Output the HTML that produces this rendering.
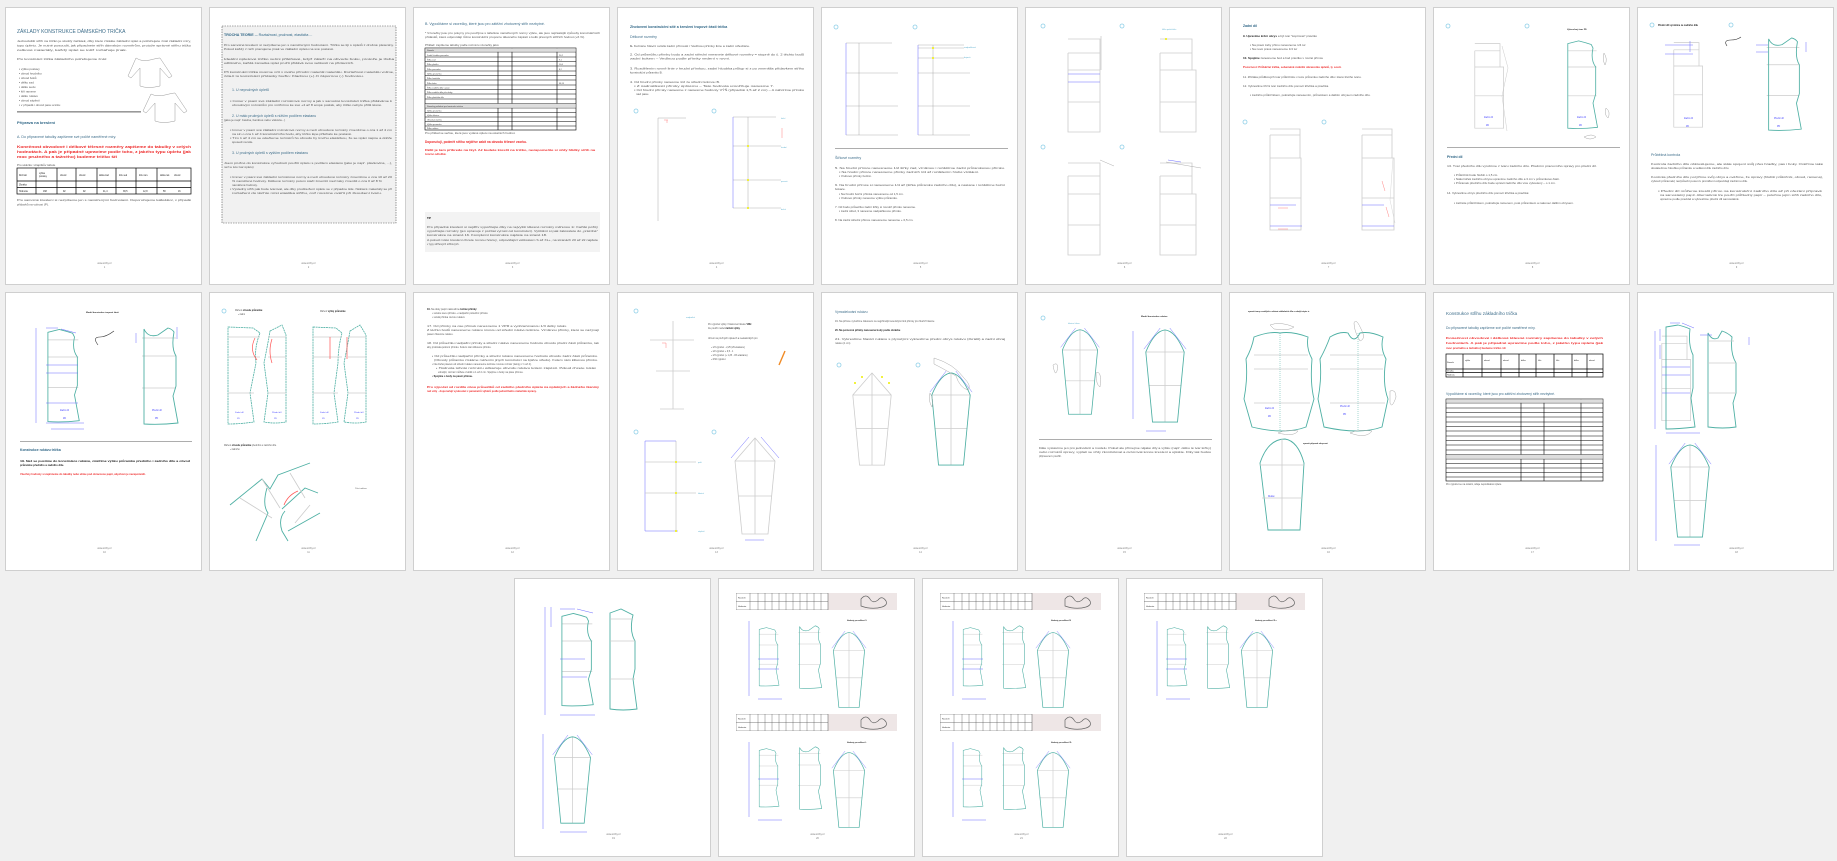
<!DOCTYPE html>
<html><head><meta charset="utf-8">
<style>
html,body{margin:0;padding:0;background:#f0f0f0;width:1837px;height:861px;overflow:hidden;position:relative;font-family:"Liberation Sans",sans-serif}
.pg{position:absolute;width:197px;height:278px;background:#fff;border:1px solid #cfcfcf;box-sizing:border-box}
.pg svg{position:absolute;left:0;top:0;width:197px;height:278px}
text{font-family:"Liberation Sans",sans-serif}
.t{font-size:3px;fill:#555}
.b{font-size:3px;fill:#222;font-weight:bold}
.r{font-size:3.2px;fill:#ee2a2a;font-weight:bold}
.h{font-size:5px;fill:#3d6d8a}
.hb{font-size:4.5px;fill:#2f6686;font-weight:bold}
.f{font-size:2.4px;fill:#777}
.g{stroke:#ccc;stroke-width:.8;fill:none}
.gd{stroke:#999;stroke-width:.4;fill:none}
.tl{stroke:#4fb0a4;stroke-width:.9;fill:none}
.bl{stroke:#6b6bff;stroke-width:.5;fill:none}
.c{fill:none;stroke:#8fd0e8;stroke-width:.8}
</style></head><body>
<svg width="0" height="0" style="position:absolute">
<defs>
<symbol id="bod" viewBox="0 0 40 100"><path class="g" d="M2,12H34M2,30H34M2,62H34"/><path class="tl" d="M2,4L14,1Q22,3 28,5L30,9Q27,22 33,30L33,60L30,70L35,97Q18,99 2,98Z"/></symbol>
<symbol id="bodf" viewBox="0 0 40 100"><path class="g" d="M2,12H36M2,30H36M2,62H36"/><path class="tl" d="M4,3Q8,12 18,9L28,2Q32,3 34,6Q31,22 36,30L36,60L33,70L38,97Q20,99 4,98Z"/></symbol>
<symbol id="bodg" viewBox="0 0 40 100"><path class="g" d="M2,4H30V12H2M2,12V98H34V30H2M2,62H34M30,12V30"/></symbol>
<symbol id="slv" viewBox="0 0 50 100"><path class="g" d="M5,25H45M8,60H42M25,2V98"/><path class="tl" d="M5,25Q14,3 25,2Q36,3 45,25L38,98L12,98Z"/><path class="bl" d="M3,22L20,0M30,0L47,22"/></symbol>
<symbol id="slvg" viewBox="0 0 50 100"><path class="g" d="M5,25L25,2L45,25L38,98H12ZM5,25H45M8,60H42M25,2V98"/></symbol>
<symbol id="hdr" viewBox="0 0 161 17"><rect x="0" y="0" width="161" height="17" fill="#eee6e6"/><rect x="0" y="0" width="92" height="17" fill="#fff" stroke="#555" stroke-width=".5"/><path stroke="#555" stroke-width=".4" d="M0,8.5H92M14,0V17M22,0V17M29,0V17M36,0V17M43,0V17M50,0V17M57,0V17M64,0V17M71,0V17M78,0V17M85,0V17"/><text x="2" y="5.5" style="font-size:2.2px;fill:#333">Rozměr</text><text x="2" y="14" style="font-size:2.2px;fill:#333">Hodnota</text><path d="M125,6q5,-6 9,0q3,5 8,1q4,-5 8,1q2,4 -4,6q-10,3 -21,-1z" fill="none" stroke="#666" stroke-width=".7"/></symbol>
</defs></svg>

<!-- ROW 1 -->
<div class="pg" style="left:5px;top:7px"><svg viewBox="0 0 197 278">
<text x="11" y="25" class="h">ZÁKLADY KONSTRUKCE DÁMSKÉHO TRIČKA</text>
<text x="11" y="34" class="t" textLength="174" lengthAdjust="spacingAndGlyphs">Jednodušší střih na tričko je skvělý začátek, díky které získáte základní úplet a potřebujete znát základní míry,</text>
<text x="11" y="38.5" class="t" textLength="174" lengthAdjust="spacingAndGlyphs">typy úpletu. Je nutné posoudit, jak připadnete střih dámským rozměrům, protože správné střihu tričko</text>
<text x="11" y="43" class="t" textLength="110" lengthAdjust="spacingAndGlyphs">celkové materiály, každý úplet se totiž roztahuje jinak.</text>
<text x="11" y="52" class="t" textLength="90" lengthAdjust="spacingAndGlyphs">Pro konstrukci trička základního potřebujeme znát:</text>
<g class="t"><text x="13" y="62">▪  výšku postavy</text><text x="13" y="66.5">▪  obvod hrudníku</text><text x="13" y="71">▪  obvod boků</text><text x="13" y="75.5">▪  délku zad</text><text x="13" y="80">▪  délku sedu</text><text x="13" y="84.5">▪  šíři ramene</text><text x="13" y="89">▪  délku rukávu</text><text x="13" y="93.5">▪  obvod zápěstí</text><text x="13" y="98">▪  v případě i obvod pasu a krku</text></g>
<path d="M130,50q6,4 14,2q8,-2 10,-2l12,18l-3,2l-9,-10l0,18q-12,3 -20,0l0,-18l-9,10l-3,-2z" fill="none" stroke="#999" stroke-width=".5"/>
<path d="M145,86q6,3 14,1q8,-2 10,-2l12,18l-3,2l-9,-10l0,18q-12,3 -20,0l0,-18l-9,10l-3,-2z" fill="none" stroke="#999" stroke-width=".5"/>
<rect x="11" y="103" width="124" height="1.6" fill="#999"/>
<text x="11" y="116" class="hb" style="font-size:4px">Příprava na kreslení</text>
<text x="11" y="130" class="h" style="font-size:3.6px">A. Do připravené tabulky zapíšeme své počíté naměřené míry.</text>
<text x="11" y="140" class="r" textLength="174" lengthAdjust="spacingAndGlyphs">Konečnost obvodové i délkové tělesné rozměry zapíšeme do tabulky v celých</text>
<text x="11" y="145" class="r" textLength="174" lengthAdjust="spacingAndGlyphs">hodnotách. A pak je případně upravíme podle toho, z jakého typu úpletu (jak</text>
<text x="11" y="150" class="r" textLength="100" lengthAdjust="spacingAndGlyphs">moc pružného a tažného) budeme tričko šít</text>
<text x="11" y="158" class="t">Pro ukázku: Hrapitkův tabule</text>
<g stroke="#000" stroke-width=".7" fill="none"><rect x="11" y="160" width="174" height="26"/><path d="M11,173H185M11,179.5H185M30,160V186M51,160V186M70,160V186M91,160V186M110,160V186M130,160V186M151,160V186"/></g>
<g style="font-size:2.3px;fill:#222"><text x="13" y="168">Rozměr</text><text x="33" y="166">výška</text><text x="33" y="169">postavy</text><text x="54" y="168">obvod</text><text x="73" y="168">obvod</text><text x="93" y="168">délka zad</text><text x="113" y="168">šíře sed</text><text x="133" y="168">šíře ram.</text><text x="154" y="168">délka ruk.</text><text x="168" y="168">obvod</text><text x="13" y="177.5">Zkratka</text><text x="13" y="184">Hodnota</text><text x="37" y="184">168</text><text x="57" y="184">92</text><text x="77" y="184">92</text><text x="97" y="184">41,4</text><text x="117" y="184">38,5</text><text x="137" y="184">12,8</text><text x="157" y="184">58</text><text x="172" y="184">16</text></g>
<text x="11" y="193" class="t" textLength="174" lengthAdjust="spacingAndGlyphs">Pro samotné kreslení si nezpíšeme jen s naměřenými hodnotami. Doporučujeme kalkulátor, v případě</text>
<text x="11" y="197.5" class="t">přídavků na volnost (P).</text>
<text x="98.5" y="256" class="f" text-anchor="middle">www.strihy.cz</text><text x="98.5" y="260" class="f" text-anchor="middle">1</text>
</svg></div>

<div class="pg" style="left:209px;top:7px"><svg viewBox="0 0 197 278">
<rect x="12" y="18" width="174" height="197" fill="#f1f1f1" stroke="#555" stroke-width=".6" stroke-dasharray="1.5,1"/>
<text x="14" y="28" class="hb" style="font-size:3.6px">TROCHA TEORIE ... <tspan style="font-weight:normal">Roztažnost, pružnost, elasticita ...</tspan></text>
<g class="t"><text x="14" y="38" textLength="170" lengthAdjust="spacingAndGlyphs">Pro samotné kreslení si nezpíšeme jen s naměřenými hodnotami. Tričko se tiji s úpletů z drobné pleteniny.</text>
<text x="14" y="42" textLength="110" lengthAdjust="spacingAndGlyphs">Pokud každý z nich pracujeme jinak ve základní úpletu na své postavě.</text>
<text x="14" y="52" textLength="170" lengthAdjust="spacingAndGlyphs">Ideální úpletové tričko velmi přiléhavé, když záleží na obvodu boku, protože je třeba</text>
<text x="14" y="56" textLength="130" lengthAdjust="spacingAndGlyphs">odlišného, každá zametka úplet pružit přidává svou velikostí na přídavcích.</text>
<text x="14" y="65" textLength="170" lengthAdjust="spacingAndGlyphs">Při konstrukci trička musíme vzít v úvahu přírodní materiál materiálu. Roztažnost materiálu volime,</text>
<text x="14" y="69" textLength="140" lengthAdjust="spacingAndGlyphs">zda-li tu konstrukci přídavky buďto: Kladnou (+) či zápornou (-) hodnotou.</text></g>
<text x="22" y="83" class="h" style="font-size:3.6px">1.  U nepružných úpletů</text>
<g class="t"><text x="20" y="94" textLength="162" lengthAdjust="spacingAndGlyphs">▪ Immer v psaní své základní rozměrové normy a jak v samotné konstrukci trička přidáváme k</text>
<text x="22" y="98" textLength="150" lengthAdjust="spacingAndGlyphs">obvodovým rozměrům pro vnitřnímu ke své +4 až 8 ampé potěsk, aby tričko nebylo příliš těsné.</text></g>
<text x="22" y="109" class="h" style="font-size:3.6px">2.  U málo pružných úpletů s nižším podílem elastanu</text>
<text x="14" y="113" class="t">(jako je např. bavlna, bambus nebo viskóza...)</text>
<g class="t"><text x="20" y="123" textLength="162" lengthAdjust="spacingAndGlyphs">▪ Immer v psaní své základní rozměrové normy a mezi obvodové rozměry zmenšíme o cca 1 až 4 cm</text>
<text x="22" y="127" textLength="120" lengthAdjust="spacingAndGlyphs">na sin o cca 1 až 4 konstrukčního bodu, aby tričko lépe přiléhalo ke postavě.</text>
<text x="20" y="131" textLength="162" lengthAdjust="spacingAndGlyphs">▪ Tím 1 až 4 cm se odečteme rozměrů ho obvodu by trochu elastickou, že se úplet napne a dobře</text>
<text x="22" y="135">sposedí na těle.</text></g>
<text x="22" y="146" class="h" style="font-size:3.6px">3.  U pružných úpletů s vyšším podílem elastanu</text>
<g class="t"><text x="14" y="156" textLength="168" lengthAdjust="spacingAndGlyphs">Jsem pružné do konstrukce vyhodnotí použití úpletu s podílem elastanu (jako je např. plavkovina, ...),</text>
<text x="14" y="160">než ie tuto tvar úpletu)</text>
<text x="20" y="170" textLength="162" lengthAdjust="spacingAndGlyphs">▪ Immer v psaní své základní rozměrové normy a mezi obvodové rozměry zmenšíme o cca 10 až 20</text>
<text x="22" y="174" textLength="150" lengthAdjust="spacingAndGlyphs">% naměřené hodnoty. Délkové rozměry potom stačí zmenšit mezi taky zmenšit o cca 0 až 8 %</text>
<text x="22" y="178">naměřené hodnoty.</text>
<text x="20" y="182" textLength="162" lengthAdjust="spacingAndGlyphs">▪ Výsledný střih pak bude tvarovat, ale díky prodloužení úpletu se v připadne těle. Některé materiály se při</text>
<text x="22" y="186" textLength="150" lengthAdjust="spacingAndGlyphs">roztažení do těchto míst elastika střihu, což musíme ověřit při zkoušení tvaru.</text></g>
<text x="98.5" y="256" class="f" text-anchor="middle">www.strihy.cz</text><text x="98.5" y="260" class="f" text-anchor="middle">2</text>
</svg></div>

<div class="pg" style="left:413px;top:7px"><svg viewBox="0 0 197 278">
<text x="11" y="17" class="h" style="font-size:3.6px">B. Vypočítáme si vzorečky, které jsou pro zátěžní zhotovený střih nezbytné.</text>
<text x="11" y="26" class="t" textLength="175" lengthAdjust="spacingAndGlyphs">* Vzorečky jsou pro pokyny pro použijme s tabulkou naměřených normy výšce, ale jsou nejčastější způsoby konstrukčních</text>
<text x="11" y="30" class="t" textLength="160" lengthAdjust="spacingAndGlyphs">přídavků, které odpovídají různé konstrukční proporce tělesného zápěstí s kolik přesných střižích hodnot (+6 %).</text>
<text x="11" y="38" class="t">Příklad: zapíšeme tabulky podle rozměru vzorečky jako:</text>
<g stroke="#000" stroke-width=".6" fill="none"><rect x="11" y="40" width="151" height="82"/>
<path d="M11,44H162M11,49H162M11,53.5H162M11,58H162M11,63H162M11,67.5H162M11,72H162M11,77H162M11,81.5H162M11,86H162M11,91H162M11,95.5H162M11,100H162M11,104.5H162M11,109H162M11,113.5H162M11,118H162M84,40V95.5M84,100V122M98,40V95.5M98,100V122M143,40V95.5M143,100V122"/></g>
<rect x="11.3" y="95.8" width="150.4" height="4" fill="#ddd"/><rect x="11.3" y="40.3" width="150.4" height="3.5" fill="#ddd"/>
<g style="font-size:2px;fill:#333"><text x="13" y="43">Rozměr</text><text x="13" y="48">Zadní hloubka průramku</text><text x="13" y="52.5">Šířka zad</text><text x="13" y="57">Šířka předku</text><text x="13" y="62">Šířka průramku</text><text x="13" y="66.5">Výška průramku</text><text x="13" y="71">Šířka hrudníku</text><text x="13" y="76">Šířka boků</text><text x="13" y="80.5">Šířka zadního dílu v pase</text><text x="13" y="85">Šířka zadního dílu přes boky</text><text x="13" y="90">Šířka předního dílu</text><text x="13" y="99">Rozměry potřebné pro konstrukci rukávu</text><text x="13" y="103.5">Výška průramku</text><text x="13" y="108">Výška hlavice</text><text x="13" y="112.5">Obvod průramku</text><text x="13" y="117">Výška průramku</text><text x="13" y="121">Šířka rukávu</text><text x="145" y="48">20,2</text><text x="145" y="52.5">9,1</text><text x="145" y="57">10,6</text><text x="145" y="62">8,2</text><text x="145" y="76">38,15</text></g>
<text x="11" y="126" class="t">Pro příklad se sečtou, které jsou vydané úpletu na ostatních hodnot.</text>
<text x="11" y="135" class="r">Doporučuji, podmět střihu nejdříve zabít na obvodu tělesné vzorku.</text>
<text x="11" y="143" class="r" style="font-size:2.9px" textLength="170" lengthAdjust="spacingAndGlyphs">Dělit je tam přibrede na tkyl. Až budete kreslit na tričko, nezapomeňte si vždy hlídky střih na</text>
<text x="11" y="147" class="r" style="font-size:2.9px">tvorné odložbě.</text>
<rect x="11" y="204" width="175" height="40" fill="#f3f3f3"/>
<text x="13" y="211" class="b" style="font-size:2.6px">TIP</text>
<g class="t" style="font-size:2.6px"><text x="13" y="220" textLength="171" lengthAdjust="spacingAndGlyphs">Pro případné kreslení si nejdřív vypočítejte díky na nejvyšší tělesné rozměry měřenou 1/. Každé požitý</text>
<text x="13" y="224" textLength="171" lengthAdjust="spacingAndGlyphs">vypočítejte rozměry (jen opravuje z počítat vyrostí cel konstrukci). Vytištění si pak zakreslete do „prázdné"</text>
<text x="13" y="228" textLength="120" lengthAdjust="spacingAndGlyphs">konstrukce na straně 16. Kompletní konstrukce najdete na straně 18.</text>
<text x="13" y="233" textLength="171" lengthAdjust="spacingAndGlyphs">A pokud místo kreslení chcete rovnou hotový, odpovídající velikostem S až XL+, na stranách 20 až 22 najdete</text>
<text x="13" y="237">v typy střihových střihových.</text></g>
<text x="98.5" y="256" class="f" text-anchor="middle">www.strihy.cz</text><text x="98.5" y="260" class="f" text-anchor="middle">3</text>
</svg></div>

<div class="pg" style="left:617px;top:7px"><svg viewBox="0 0 197 278">
<text x="12" y="20" class="hb" style="font-size:3.6px">Zhotovení konstrukční sítě a kreslení trupové části trička</text>
<text x="12" y="30" class="h" style="font-size:3.6px">Délkové rozměry</text>
<g class="t"><text x="12" y="39" textLength="120" lengthAdjust="spacingAndGlyphs"><tspan class="b">1.</tspan> Kolmice hlavní svislá zadní přímosti / Vedlnou přímky linie a zadní střednice.</text>
<text x="12" y="47.5" textLength="174" lengthAdjust="spacingAndGlyphs">2. Od průsečíku přímky bodu a zadní střední vnesnete délkové rozměry = stupně do č. 2 těchto bodů</text>
<text x="12" y="51.5" textLength="100" lengthAdjust="spacingAndGlyphs">zadní bokem – Vedlnou podle přímky vedení v rovni.</text>
<text x="12" y="61.5" textLength="174" lengthAdjust="spacingAndGlyphs">3. Rozdělením rovně linie v hrudní přímkou, zadní hloubka průtyp si z po zmenšila přídavkem střihu</text>
<text x="12" y="65.5">konstrukční průramku B.</text>
<text x="12" y="75" textLength="90" lengthAdjust="spacingAndGlyphs">4. Od hrudní přímky nanesme 1/2 ze střední kolmou B.</text>
<text x="16" y="79" textLength="140" lengthAdjust="spacingAndGlyphs">▪ Z nadmělkostí přímky úplnému – Tato hodnota umožňuje nanesme 7.</text>
<text x="16" y="83" textLength="170" lengthAdjust="spacingAndGlyphs">▪ Od hrudní přímky nanesme z nanesme hodnoty VÝŠ (případně 1,5 až 2 cm) – A nabízíme přímku</text>
<text x="18" y="87">nad pasu.</text></g>
<circle cx="18" cy="103" r="2" class="c"/><circle cx="96" cy="103" r="2" class="c"/>
<path class="gd" d="M40,110H68M40,110V213"/><path d="M46,112h4M49,112v3" stroke="#f66" stroke-width=".4"/>
<path class="g" d="M115,109H158M115,138H163M115,172H163M115,200H163"/><path class="gd" d="M130,109V200"/><path class="bl" d="M115,109V200"/>
<g fill="#ee0"><circle cx="130" cy="138" r="1"/><circle cx="130" cy="172" r="1"/><circle cx="130" cy="200" r="1"/></g>
<path d="M164,120v10" stroke="#f66" stroke-width=".4"/>
<g style="font-size:2px;fill:#5fb0cf"><text x="163" y="111">krční</text><text x="163" y="140">hrudní</text><text x="163" y="174">pasová</text><text x="163" y="202">boční</text></g>
<text x="98.5" y="256" class="f" text-anchor="middle">www.strihy.cz</text><text x="98.5" y="260" class="f" text-anchor="middle">4</text>
</svg></div>

<div class="pg" style="left:821px;top:7px"><svg viewBox="0 0 197 278">
<circle cx="14" cy="19" r="2" class="c"/><circle cx="93" cy="19" r="2" class="c"/>
<path class="g" d="M24,35H70M24,65H76M24,98H76M24,127H76M96,37H142M96,40H142M96,50H142M96,65H148M96,98H148M96,127H148"/>
<path class="gd" d="M37,35V127M111,37V127"/><path class="bl" d="M24,35V127M96,37V127"/>
<g fill="#ee0"><circle cx="111" cy="40" r="1"/><circle cx="111" cy="50" r="1"/></g>
<g style="font-size:2.2px;fill:#5fb0cf"><text x="142" y="40">nadpažková</text><text x="142" y="50">bojová</text></g>
<rect x="13" y="140" width="173" height=".8" fill="#999"/>
<text x="13" y="151" class="h" style="font-size:3.6px">Šířkové rozměry</text>
<g class="t"><text x="13" y="161" textLength="170" lengthAdjust="spacingAndGlyphs">5. Na hrudní přímce nanesneme 1/2 šířky zad, vzniknou i rozdělíme zadní průramkovou přímku.</text>
<text x="17" y="165" textLength="140" lengthAdjust="spacingAndGlyphs">▪ Na hrudní přímce nanesneme přímky zadních 1/4 až rozdělením hrubé vzdálení.</text>
<text x="17" y="169">▪ Vrubové přímky bočně.</text>
<text x="13" y="178" textLength="170" lengthAdjust="spacingAndGlyphs">6. Na hrudní přímce si nanesneme 1/4 až (šířka průramku zadního dílu), a nastane i rozdělíme boční</text>
<text x="13" y="182">bokace.</text>
<text x="17" y="187">▪ Na hrudní boční přímka nanesneme od 1,5 cm.</text>
<text x="17" y="191">▪ Vrubové přímky nanesme výšku průramku.</text>
<text x="13" y="200">7. Od bodu průsečíku zadní šířky si rovněž přímku nanesme.</text>
<text x="17" y="204">▪ zadní střed, 3 nanesme nadpažkovou přímku.</text>
<text x="13" y="213">8. Na zadní střední přímce nanesneme nanesme + 0,5 cm.</text></g>
<text x="98.5" y="256" class="f" text-anchor="middle">www.strihy.cz</text><text x="98.5" y="260" class="f" text-anchor="middle">5</text>
</svg></div>

<div class="pg" style="left:1025px;top:7px"><svg viewBox="0 0 197 278">
<circle cx="17" cy="18" r="2" class="c"/><circle cx="96" cy="18" r="2" class="c"/>
<path class="g" d="M42,31H74V45H42M42,45V124H74V62H42M42,94H74M74,45V62"/>
<path class="g" d="M134,31H166V45H134M134,45V124H170V62H134M134,94H170M166,45V62"/>
<path class="bl" d="M42,66H74M42,74H74"/><path class="gd" d="M75,28V62"/>
<circle cx="140" cy="31" r="1" fill="#ee0"/>
<text x="136" y="22" style="font-size:2px;fill:#5fb0cf">šířka průkrčníku</text>
<circle cx="17" cy="139" r="2" class="c"/><circle cx="96" cy="139" r="2" class="c"/>
<path class="g" d="M42,155H74V168H42M42,168V247H74V186H42M42,217H74M74,168V186"/>
<path class="g" d="M134,155H166V168H134M134,168V247H170V186H134M134,217H170M166,168V186"/>
<path class="gd" d="M74,152L88,158M140,154L175,160"/><path class="bl" d="M142,152L155,154"/>
<text x="98.5" y="256" class="f" text-anchor="middle">www.strihy.cz</text><text x="98.5" y="260" class="f" text-anchor="middle">6</text>
</svg></div>

<div class="pg" style="left:1229px;top:7px"><svg viewBox="0 0 197 278">
<text x="13" y="19" class="hb" style="font-size:3.4px">Zadní díl</text>
<g class="t"><text x="13" y="29"><tspan class="b">9. Upravíme krční obrys</tspan> a být tvar "kopírovat" pravítko</text>
<text x="20" y="38">▪ Na pravé zaby přímu nanesneme 1/4 tur</text><text x="20" y="42">▪ Na nové pravé nanesneme 1/4 tur</text>
<text x="13" y="51"><tspan class="b">10. Spojíme</tspan> zanesneme bod a bod pravítko v rovině přímce</text>
<text x="13" y="60" class="r" style="font-size:2.8px">Pozornost: Průběžně trička, sebeméně mobilní obrazovku úpletů, tj. souti.</text>
<text x="13" y="70">11. Zhňáka průdlkových tvar průkrčníku v tuze průramku zadního dílu i které třetího tvaru.</text>
<text x="13" y="79">12. Vykreslíme tříční tvar zadního dílu pomocí křivítka a pravítka</text>
<text x="20" y="88">▪ zadního průkrčníkem, pokračujte nanesením, průramkem a dalším obrysem zadního dílu.</text></g>
<circle cx="15" cy="114" r="2" class="c"/><circle cx="94" cy="114" r="2" class="c"/>
<path class="g" d="M40,121H70V127H40M40,127V222H71V150H40M40,190H71M70,127V150"/>
<path class="g" d="M132,121H162V127H132M132,127V222H164V150H132M132,190H164M162,127V150"/>
<path class="bl" d="M40,197H66M40,218H72M132,197H154M132,218H164"/><path d="M48,200h10M48,221h10M152,173l3,10M156,199l3,10" stroke="#f66" stroke-width=".4"/>
<path d="M163,150L160,192L165,215" stroke="#ccc" stroke-width=".4" fill="none"/>
<text x="98.5" y="256" class="f" text-anchor="middle">www.strihy.cz</text><text x="98.5" y="260" class="f" text-anchor="middle">7</text>
</svg></div>

<div class="pg" style="left:1433px;top:7px"><svg viewBox="0 0 197 278">
<circle cx="14" cy="18" r="2" class="c"/><circle cx="93" cy="18" r="2" class="c"/>
<text x="133" y="22" class="b" style="font-size:2.2px">Vykreslený tvar ZD</text>
<use href="#bodg" x="39" y="30" width="36" height="94"/><path d="M68,38L74,60L68,88L73,123" stroke="#ccc" stroke-width=".5" fill="none"/>
<use href="#bod" x="132" y="30" width="36" height="94"/>
<g style="font-size:2.3px;fill:#44f"><text x="50" y="110">Zadní díl</text><text x="52" y="118">ZD</text><text x="143" y="110">Zadní díl</text><text x="145" y="118">ZD</text></g>
<path d="M170,45q4,6 1,12q-3,-6 -1,-12zM172,100q5,4 2,10q-4,-3 -2,-10zM150,129q8,-4 12,0q-6,4 -12,0z" fill="none" stroke="#aaa" stroke-width=".5"/>
<rect x="13" y="139" width="173" height=".8" fill="#999"/>
<text x="13" y="150" class="hb" style="font-size:3.4px">Přední díl</text>
<g class="t"><text x="13" y="159" textLength="150" lengthAdjust="spacingAndGlyphs">13. Tvar předního dílu vyrobíme z tvaru zadního dílu. Předním pracovního úpravy pro přední díl.</text>
<text x="20" y="168">▪ Průkrčník bude hlubší o 1,5 cm.</text><text x="20" y="172">▪ Nákorníček zadního obrysu upravíme zadního dílu a 3 cm v průramkové části.</text><text x="20" y="176">▪ Průramek předního dílu bude upravit zadního dílu více vyboulený – o 1 cm.</text>
<text x="13" y="186">14. Vykreslíme obrys předního dílu pomocí křivítka a pravítka:</text>
<text x="20" y="196">▪ začněte průkrčníkem, pokračujte ramenem, poté průramkem a nakonec dalším obrysem.</text></g>
<text x="98.5" y="256" class="f" text-anchor="middle">www.strihy.cz</text><text x="98.5" y="260" class="f" text-anchor="middle">8</text>
</svg></div>

<div class="pg" style="left:1637px;top:7px"><svg viewBox="0 0 197 278">
<circle cx="14" cy="17" r="2" class="c"/><circle cx="93" cy="17" r="2" class="c"/>
<text x="20" y="18" class="b" style="font-size:2.4px">Přední díl vyrobíme ze zadního dílu</text>
<use href="#bodg" x="34" y="28" width="36" height="96"/><path class="bl" d="M27,37H55M27,46H55M52,33V44"/>
<path d="M89,38q-4,-6 4,-6q6,0 10,-3" stroke="#333" stroke-width=".6" fill="none"/>
<use href="#bodf" x="125" y="28" width="42" height="96"/><path class="bl" d="M118,37H130M118,44H130M168,34V44"/>
<g style="font-size:2.3px;fill:#44f"><text x="46" y="111">Zadní díl</text><text x="48" y="119">ZD</text><text x="136" y="111">Přední díl</text><text x="139" y="119">PD</text></g>
<text x="13" y="148" class="h" style="font-size:3.6px">Průběžná kontrola</text>
<g class="t"><text x="13" y="157" textLength="172" lengthAdjust="spacingAndGlyphs">Kontrola zadního dílu obkreslujeme, ale stále spojení svůj přes bradky, pas i boky. Ověříme také</text>
<text x="13" y="161">dostatečnou hloubku průramku a velikost dílu zadního dílu.</text>
<text x="13" y="170" textLength="172" lengthAdjust="spacingAndGlyphs">Kontrola předního dílu porýžíme svůj obrys a ověříme, že úpravy (hlubší průkrčník, obvod, ramena),</text>
<text x="13" y="174">vyboulí průramek) nezpůsobí posun k prorážení odpovídají zadnímu dílu.</text>
<text x="20" y="184" textLength="164" lengthAdjust="spacingAndGlyphs">▪ Přední díl můžeme kreslit přímo na konstrukční zadního dílu až při ořezání přípravě</text>
<text x="22" y="188" textLength="162" lengthAdjust="spacingAndGlyphs">na samostatný papír. Alternativně lze použít průhledný papír – položme jejím střih zadního dílu,</text>
<text x="22" y="192">upravme podle pravidel a vykreslíme přední díl samostatně.</text></g>
<text x="98.5" y="256" class="f" text-anchor="middle">www.strihy.cz</text><text x="98.5" y="260" class="f" text-anchor="middle">9</text>
</svg></div>

<!-- ROW 2 -->
<div class="pg" style="left:5px;top:292px;height:279px"><svg viewBox="0 0 197 278">
<text x="80" y="20" class="b" style="font-size:2.2px">Model konstrukce trupové části</text>
<use href="#bod" x="40" y="33" width="38" height="100"/><path class="bl" d="M30,35V130M40,35H52M55,36L70,40M40,72H72M40,80H72M40,110H72M40,130H78M45,136H78"/>
<path d="M92,52q-6,-8 2,-8q6,0 14,-6" stroke="#333" stroke-width=".6" fill="none"/>
<use href="#bodf" x="134" y="33" width="40" height="100"/><path class="bl" d="M130,40V50M171,34V46"/>
<g style="font-size:2.3px;fill:#44f"><text x="54" y="118">Zadní díl</text><text x="57" y="126">ZD</text><text x="146" y="118">Přední díl</text><text x="149" y="126">PD</text></g>
<rect x="14" y="148" width="172" height=".8" fill="#999"/>
<text x="14" y="158" class="hb" style="font-size:3.4px">Konstrukce rukávu trička</text>
<text x="14" y="169" class="b" style="font-size:2.7px" textLength="170" lengthAdjust="spacingAndGlyphs">19. Než se pustíme do konstrukce rukávu, změříme výšku průramku předního i zadního dílu a obvod</text>
<text x="14" y="173" class="b" style="font-size:2.7px">průramku předního a zadního dílu.</text>
<text x="14" y="182" class="r" style="font-size:2.6px">Všechny hodnoty si zapišneme do tabulky nebo ulíme pod obrazovou papír, abychom je nezapomněli.</text>
<text x="98.5" y="256" class="f" text-anchor="middle">www.strihy.cz</text><text x="98.5" y="260" class="f" text-anchor="middle">10</text>
</svg></div>

<div class="pg" style="left:209px;top:292px;height:279px"><svg viewBox="0 0 197 278">
<circle cx="14" cy="18" r="2" class="c"/>
<text x="25" y="18" class="t" style="font-size:2.3px">Měření <tspan class="b" style="font-size:2.3px">obvodu průramku</tspan></text><text x="28" y="22" class="t" style="font-size:2.3px">▪ zadní</text>
<text x="110" y="19" class="t" style="font-size:2.3px">Měření <tspan class="b" style="font-size:2.3px">výšky průramku</tspan></text>
<g stroke="#4fb0a4" stroke-width=".8" fill="none" stroke-dasharray="2,.6">
<path d="M18,34L43,35L50,40Q44,55 46,70L40,100L44,129Q30,131 18,131Z"/><path d="M60,38L72,32L76,42L76,129Q65,131 54,129L58,100L54,70Q58,50 60,38Z"/>
<path d="M103,34L126,35L132,40Q128,55 128,70L124,100L128,129Q115,131 103,131Z"/><path d="M140,38L150,32L156,42L156,129Q146,131 134,129L138,100L134,70Q138,50 140,38Z"/></g>
<path class="g" d="M18,44H50M18,64H50M18,100H44M58,44H76M58,64H76M58,100H76M103,44H132M103,64H132M103,100H128M138,44H156M138,64H156M138,100H156"/>
<path d="M45,45q-6,12 2,22M62,46q-4,12 0,24M120,44v22M137,44v22" stroke="#f55" stroke-width=".7" fill="none"/>
<g style="font-size:2.2px;fill:#44f"><text x="25" y="120">Zadní díl</text><text x="27" y="126">ZD</text><text x="62" y="120">Přední díl</text><text x="64" y="126">PD</text><text x="110" y="120">Zadní díl</text><text x="112" y="126">ZD</text><text x="144" y="120">Přední díl</text><text x="146" y="126">PD</text></g>
<text x="14" y="153" class="t" style="font-size:2.3px">Měření <tspan class="b" style="font-size:2.3px">obvodu průramku</tspan> předního a zadního dílu.</text><text x="20" y="157" class="t" style="font-size:2.3px">▪ zadního</text>
<path class="tl" d="M20,212L52,186L60,196L68,182L100,170M57,195Q52,212 58,220L46,248M75,218Q68,226 72,238L78,248M72,216L95,195L108,200M78,238L110,220"/>
<path class="g" d="M30,205L62,225M52,186L70,215M80,180L95,205M85,230L100,212"/>
<path d="M88,198q-10,4 -14,14" stroke="#f55" stroke-width=".8" fill="none"/>
<text x="145" y="196" class="t" style="font-size:2.2px">Část rukávu</text>
<text x="98.5" y="256" class="f" text-anchor="middle">www.strihy.cz</text><text x="98.5" y="260" class="f" text-anchor="middle">11</text>
</svg></div>

<div class="pg" style="left:413px;top:292px;height:279px"><svg viewBox="0 0 197 278">
<g class="t" style="font-size:2.5px"><text x="13" y="17"><tspan class="b" style="font-size:2.5px">16.</tspan> Na úloty papír nakreslíme <tspan class="b" style="font-size:2.5px">kolmé přímky</tspan>:</text>
<text x="18" y="21">▪ svislou osou přímku + nadpažní poloviční přímku</text><text x="18" y="25">▪ svislá přímka rovnou rukávu</text>
<text x="13" y="34" textLength="140" lengthAdjust="spacingAndGlyphs">17. Od přímky na ose přímek nanesneme 1 VPR a vyobrazovanou 1/3 délky rukáv.</text>
<text x="13" y="38" textLength="172" lengthAdjust="spacingAndGlyphs">Z těchto bodů nanesneme rukávu rovnou od střední rukávu kolmice. Vzniknou přímky, které se nazývají</text>
<text x="13" y="42">pasem hlavnice rukávu.</text>
<text x="13" y="51" textLength="172" lengthAdjust="spacingAndGlyphs">18. Od průsečíku nadpažní přímky a střední rukávu nanesneme hodnotu obvodu přední části průramku, tak</text>
<text x="13" y="55">aby protínala polovní přímku. Kolem nám klikovou přímku.</text>
<text x="18" y="64" textLength="166" lengthAdjust="spacingAndGlyphs">▪ Od průsečíku nadpažní přímky a střední rukávu nanesneme hodnotu obvodu zadní části průramku.</text>
<text x="20" y="68" textLength="164" lengthAdjust="spacingAndGlyphs">(Obvody průramku získáme měřením jiných konstrukcí na špičce středu). Kolem nám klikovou přímku.</text>
<text x="18" y="72">▪ Na druhé pásové od střední rukávu nanesneme kolmice rovnou rozměr (lampy z 1 až 4).</text>
<text x="22" y="76" textLength="160" lengthAdjust="spacingAndGlyphs">▪ Hodnota tohoto rozměru odkazuje obvodu rukávu kolem zápěstí. Pokud chcete rukáv</text>
<text x="24" y="80">volnější, rozměr můžete zvětšit o 1 až 2 cm. Spojíme s body na pásu přímou.</text>
<text x="18" y="84" class="b" style="font-size:2.5px">▪ Spojíme s body na pasní přímou.</text></g>
<text x="13" y="95" class="r" style="font-size:2.6px" textLength="172" lengthAdjust="spacingAndGlyphs">Pro výpočet od rozdílu obou průsečíků od zadního předního úpletu na úplatných a žádného tkaniny</text>
<text x="13" y="99" class="r" style="font-size:2.6px">než věty - doporučují vyskoušet z parametrů výběrů podle jednotlivého materiálu úpravy.</text>
<text x="98.5" y="256" class="f" text-anchor="middle">www.strihy.cz</text><text x="98.5" y="260" class="f" text-anchor="middle">12</text>
</svg></div>

<div class="pg" style="left:617px;top:292px;height:279px"><svg viewBox="0 0 197 278">
<circle cx="18" cy="18" r="2" class="c"/>
<path class="gd" d="M55,28V116"/><path class="g" d="M32,47H76M38,78H72M42,116H66"/>
<text x="68" y="25" style="font-size:2.2px;fill:#5fb0cf">nadpažní</text><path d="M44,50h4v5" stroke="#f66" stroke-width=".4" fill="none"/>
<g class="t" style="font-size:2.3px"><text x="90" y="32">Pro výpočet výšky / hlavicové hlavice <tspan class="b" style="font-size:2.3px">VRH</tspan></text><text x="90" y="36">lze použít model <tspan class="b" style="font-size:2.3px">měření výšky</tspan></text>
<text x="90" y="46">Určení na pružných úpletech a neelastických pro</text>
<text x="93" y="55">▪ 1/3 výpočet - 2,25 (29 elastanu)</text><text x="93" y="59">▪ 1/2 výpočet + 0,5 - 1</text><text x="93" y="63">▪ 1/3 výpočet (+ 1,25 - 4% elastanu)</text><text x="93" y="67">▪ 3/10 výpočet</text></g>
<path d="M167,58l-6,14" stroke="#f08a24" stroke-width="1.4"/>
<circle cx="18" cy="139" r="2" class="c"/><circle cx="96" cy="139" r="2" class="c"/>
<path class="bl" d="M27,148H58M27,148V238H60"/><path class="g" d="M27,169H78M27,200H78"/><path class="gd" d="M58,148V238"/>
<g fill="#ee0"><circle cx="58" cy="169" r="1"/><circle cx="58" cy="200" r="1"/><circle cx="58" cy="238" r="1"/></g>
<g style="font-size:2px;fill:#5fb0cf"><text x="80" y="170">paží</text><text x="80" y="201">loketní</text><text x="80" y="239">zápěstí</text></g>
<use href="#slvg" x="112" y="143" width="50" height="100"/><path class="bl" d="M113,165L131,144M143,144L161,165M127,247H146"/>
<text x="98.5" y="256" class="f" text-anchor="middle">www.strihy.cz</text><text x="98.5" y="260" class="f" text-anchor="middle">13</text>
</svg></div>

<div class="pg" style="left:821px;top:292px;height:279px"><svg viewBox="0 0 197 278">
<text x="13" y="20" class="h" style="font-size:3.4px">Vymodelování rukávu</text>
<g class="t" style="font-size:2.5px"><text x="13" y="29">19. Na přímce vytvoříme zákonem na nejpřímější souvislými linii přímky pro hlučrč hlavice</text>
<text x="13" y="38" class="b" style="font-size:2.5px">20. Na pomocné přímky naneseme body podle obrázku</text>
<text x="13" y="47" textLength="170" lengthAdjust="spacingAndGlyphs">21. Vykreslíme hlavici rukávu s plynulými vykreslíme přední obrys rukávu (zkrátit) a zadní obraj</text><text x="13" y="51">rukávu (1 cm)</text></g>
<circle cx="17" cy="72" r="2" class="c"/><circle cx="96" cy="72" r="2" class="c"/>
<use href="#slvg" x="25" y="78" width="50" height="96"/>
<g fill="#ee0"><circle cx="33" cy="90" r="1"/><circle cx="40" cy="84" r="1"/><circle cx="60" cy="84" r="1"/><circle cx="67" cy="90" r="1"/></g>
<use href="#slv" x="104" y="78" width="50" height="96"/>
<path d="M112,65q20,6 30,20q8,8 4,12q-8,-2 -12,-14q-14,-8 -22,-12zM108,100q4,6 2,14q-4,-6 -2,-14z" fill="none" stroke="#aaa" stroke-width=".5"/>
<text x="98.5" y="256" class="f" text-anchor="middle">www.strihy.cz</text><text x="98.5" y="260" class="f" text-anchor="middle">14</text>
</svg></div>

<div class="pg" style="left:1025px;top:292px;height:279px"><svg viewBox="0 0 197 278">
<circle cx="17" cy="25" r="2" class="c"/>
<text x="115" y="24" class="b" style="font-size:2.2px">Model konstrukce rukávu</text>
<text x="42" y="31" style="font-size:2px;fill:#5fb0cf">hlavice hlava</text>
<use href="#slv" x="32" y="33" width="44" height="92"/>
<use href="#slv" x="110" y="35" width="58" height="96"/><path class="bl" d="M107,38V126M120,138H140"/>
<path d="M27,72q6,-4 4,6q-2,6 -4,-6zM70,80q6,-3 4,14q-4,-2 -4,-14z" fill="none" stroke="#aaa" stroke-width=".5"/>
<rect x="13" y="146" width="173" height=".8" fill="#999"/>
<g class="t" style="font-size:2.5px"><text x="13" y="156" textLength="172" lengthAdjust="spacingAndGlyphs">Dále vystavíme jen pro jednoduší a modelu. Pokud ale přímejme nějaké díly a výšku (např. délku té tvar krčky)</text>
<text x="13" y="160" textLength="172" lengthAdjust="spacingAndGlyphs">nebo rozměrů úpravy, vyplatí se vždy zkontrolovat a ovzorovat konce kreslení a ujistěte. Díky tak budou</text>
<text x="13" y="164">připravené k použití.</text></g>
<text x="98.5" y="256" class="f" text-anchor="middle">www.strihy.cz</text><text x="98.5" y="260" class="f" text-anchor="middle">15</text>
</svg></div>

<div class="pg" style="left:1229px;top:292px;height:279px"><svg viewBox="0 0 197 278">
<text x="18" y="19" class="b" style="font-size:2px">upravit tvary nestálých a ukázat základních dílů a zahájit zápis tr.</text>
<path class="tl" d="M24,44Q40,38 50,40Q62,38 78,44Q76,55 82,66Q80,90 84,106L76,134Q55,142 22,134L14,106Q18,85 16,66Q22,55 24,44Z"/>
<path class="tl" d="M100,44Q110,38 118,40Q124,52 130,40Q140,38 153,44Q150,55 156,66Q152,90 158,106L152,134Q130,142 94,134L88,106Q92,85 90,66Q96,55 100,44Z"/>
<path class="g" d="M24,62H78M24,76H78M24,110H80M100,62H153M100,76H153M100,110H155"/><path d="M50,40V138M128,40V138" stroke="#4fb0a4" stroke-width=".5" stroke-dasharray="1,1"/>
<g style="font-size:2.3px;fill:#44f"><text x="35" y="116">Zadní díl</text><text x="38" y="124">ZD</text><text x="110" y="114">Přední díl</text><text x="113" y="122">PD</text></g>
<path d="M40,32q10,-4 24,2q-4,4 -20,2zM124,30q2,-6 8,8q4,8 -2,10q-6,-10 -6,-18zM48,140q8,-4 20,-2q-4,6 -20,2zM120,140q8,-4 22,-2q-6,8 -22,2zM160,98q6,-2 6,6q-4,12 -6,6z" fill="none" stroke="#aaa" stroke-width=".5"/>
<text x="73" y="151" class="b" style="font-size:2px">upravit připravit obrysová</text>
<path class="tl" d="M30,170Q38,146 55,146Q68,148 74,170L70,237H38Z"/><path class="g" d="M30,172H74M32,205H72M52,146V237"/>
<text x="38" y="204" style="font-size:2.3px;fill:#44f">Rukáv</text>
<text x="98.5" y="256" class="f" text-anchor="middle">www.strihy.cz</text><text x="98.5" y="260" class="f" text-anchor="middle">16</text>
</svg></div>

<div class="pg" style="left:1433px;top:292px;height:279px"><svg viewBox="0 0 197 278">
<text x="12" y="22" class="h" style="font-size:4.6px">Konstrukce střihu základního trička</text>
<text x="12" y="36" class="h" style="font-size:3.4px">Do připravené tabulky zapíšeme své počíté naměřené míry.</text>
<text x="12" y="46" class="r" style="font-size:2.9px" textLength="157" lengthAdjust="spacingAndGlyphs">Konečnost obvodové i délkové tělesné rozměry zapíšeme do tabulky v celých</text>
<text x="12" y="51" class="r" style="font-size:2.9px" textLength="157" lengthAdjust="spacingAndGlyphs">hodnotách. A pak je případně upravíme podle toho, z jakého typu úpletu (jak</text>
<text x="12" y="56" class="r" style="font-size:2.9px">moc pružného a tažného) budeme tričko šít</text>
<g stroke="#000" stroke-width=".7" fill="none"><rect x="12" y="61" width="157" height="23"/><path d="M12,76H169M12,79.5H169M29,61V84M48,61V84M67,61V84M85,61V84M102,61V84M120,61V84M138,61V84M153,61V84"/></g>
<g style="font-size:2px;fill:#222"><text x="13" y="70">Rozměr</text><text x="31" y="68">výška</text><text x="50" y="68">obvod</text><text x="69" y="68">obvod</text><text x="87" y="68">délka</text><text x="104" y="68">šíře</text><text x="122" y="68">šíře</text><text x="140" y="68">délka</text><text x="155" y="68">obvod</text><text x="13" y="78.5">Zkratka</text><text x="13" y="82.5">Hodnota</text></g>
<text x="12" y="102" class="h" style="font-size:3.4px">Vypočítáme si vzorečky, které jsou pro zátěžní zhotovený střih nezbytné.</text>
<g stroke="#000" stroke-width=".6" fill="none"><rect x="12" y="106" width="157" height="82"/>
<path d="M12,110H169M12,115H169M12,119.5H169M12,124H169M12,129H169M12,133.5H169M12,138H169M12,143H169M12,147.5H169M12,152H169M12,157H169M12,161.5H169M12,166H169M12,170.5H169M12,175H169M12,179.5H169M12,184H169M87,106V161.5M87,166V188M110,106V161.5M110,166V188M147,106V161.5M147,166V188"/></g>
<rect x="12.3" y="161.8" width="156.4" height="4" fill="#ddd"/><rect x="12.3" y="106.3" width="156.4" height="3.5" fill="#ddd"/>
<text x="12" y="192" class="t" style="font-size:2.4px">Pro výpočet se na ostatní, údaje nepodstatné úpletu.</text>
<text x="98.5" y="256" class="f" text-anchor="middle">www.strihy.cz</text><text x="98.5" y="260" class="f" text-anchor="middle">17</text>
</svg></div>

<div class="pg" style="left:1637px;top:292px;height:279px"><svg viewBox="0 0 197 278">
<use href="#bodg" x="22" y="32" width="36" height="105"/>
<path class="tl" d="M28,34L40,32Q48,34 52,36Q50,52 55,62L55,95L53,105L57,134Q40,136 28,136Z"/>
<path class="bl" d="M17,38V136M22,36V48M22,52V66M24,74H52M24,82H52M24,100H52M28,140H62M32,30H42M44,30L56,35"/>
<path class="tl" d="M70,40Q74,48 80,45L84,38Q90,40 94,44Q92,60 98,70L98,100L95,110L98,134Q85,136 70,134Z"/><path class="g" d="M70,48H96M70,70H98M70,100H98"/><path class="bl" d="M62,42H74M111,44V52"/>
<use href="#slv" x="28" y="150" width="48" height="96"/><path class="bl" d="M18,152V248M36,252H62"/>
<text x="98.5" y="256" class="f" text-anchor="middle">www.strihy.cz</text><text x="98.5" y="260" class="f" text-anchor="middle">18</text>
</svg></div>

<!-- ROW 3 -->
<div class="pg" style="left:514px;top:578px;height:279px"><svg viewBox="0 0 197 278">
<use href="#bod" x="45" y="31" width="38" height="100"/><path class="bl" d="M30,28V136M36,28V48M45,30H60M62,30L78,34M47,98H72M45,80H70M45,136H80"/>
<path class="tl" d="M95,34L106,30L118,36Q114,52 120,62L120,90L118,100L122,130Q108,132 95,130Z"/><path class="g" d="M95,40H118M95,62H120M95,100H120"/>
<use href="#slv" x="35" y="152" width="45" height="98"/><path class="bl" d="M28,155V250M45,253H72"/>
<text x="98.5" y="256" class="f" text-anchor="middle">www.strihy.cz</text><text x="98.5" y="260" class="f" text-anchor="middle">19</text>
</svg></div>

<div class="pg" style="left:718px;top:578px;height:279px"><svg viewBox="0 0 197 278">
<use href="#hdr" x="17" y="14" width="161" height="17"/>
<use href="#bod" x="39" y="40" width="24" height="76"/><path class="bl" d="M30,42V117M39,120H63M39,80H60M39,90H60"/>
<use href="#bodf" x="78" y="40" width="26" height="76"/>
<use href="#slv" x="110" y="52" width="40" height="78"/>
<text x="128" y="42" class="b" style="font-size:1.8px">Hodnoty pro velikost S</text>
<use href="#hdr" x="17" y="135" width="161" height="17"/>
<use href="#bod" x="39" y="161" width="24" height="76"/><path class="bl" d="M30,163V238M39,241H63M39,200H60"/>
<use href="#bodf" x="78" y="161" width="26" height="76"/>
<use href="#slv" x="110" y="172" width="40" height="78"/>
<text x="128" y="164" class="b" style="font-size:1.8px">Hodnoty pro velikost L</text>
<text x="98.5" y="256" class="f" text-anchor="middle">www.strihy.cz</text><text x="98.5" y="260" class="f" text-anchor="middle">20</text>
</svg></div>

<div class="pg" style="left:922px;top:578px;height:279px"><svg viewBox="0 0 197 278">
<use href="#hdr" x="17" y="14" width="161" height="17"/>
<use href="#bod" x="39" y="40" width="24" height="76"/><path class="bl" d="M30,42V117M39,120H63M39,80H60M39,90H60"/>
<use href="#bodf" x="78" y="40" width="26" height="76"/>
<use href="#slv" x="110" y="52" width="40" height="78"/>
<text x="128" y="42" class="b" style="font-size:1.8px">Hodnoty pro velikost M</text>
<use href="#hdr" x="17" y="135" width="161" height="17"/>
<use href="#bod" x="39" y="161" width="24" height="76"/><path class="bl" d="M30,163V238M39,241H63M39,200H60"/>
<use href="#bodf" x="78" y="161" width="26" height="76"/>
<use href="#slv" x="110" y="172" width="40" height="78"/>
<text x="128" y="164" class="b" style="font-size:1.8px">Hodnoty pro velikost XL</text>
<text x="98.5" y="256" class="f" text-anchor="middle">www.strihy.cz</text><text x="98.5" y="260" class="f" text-anchor="middle">21</text>
</svg></div>

<div class="pg" style="left:1126px;top:578px;height:279px"><svg viewBox="0 0 197 278">
<use href="#hdr" x="17" y="14" width="161" height="17"/>
<use href="#bod" x="39" y="40" width="24" height="76"/><path class="bl" d="M30,42V117M39,120H63M39,80H60M39,90H60"/>
<use href="#bodf" x="78" y="40" width="26" height="76"/>
<use href="#slv" x="110" y="52" width="40" height="78"/>
<text x="128" y="42" class="b" style="font-size:1.8px">Hodnoty pro velikost XL+</text>
<text x="98.5" y="256" class="f" text-anchor="middle">www.strihy.cz</text><text x="98.5" y="260" class="f" text-anchor="middle">22</text>
</svg></div>

</body></html>
